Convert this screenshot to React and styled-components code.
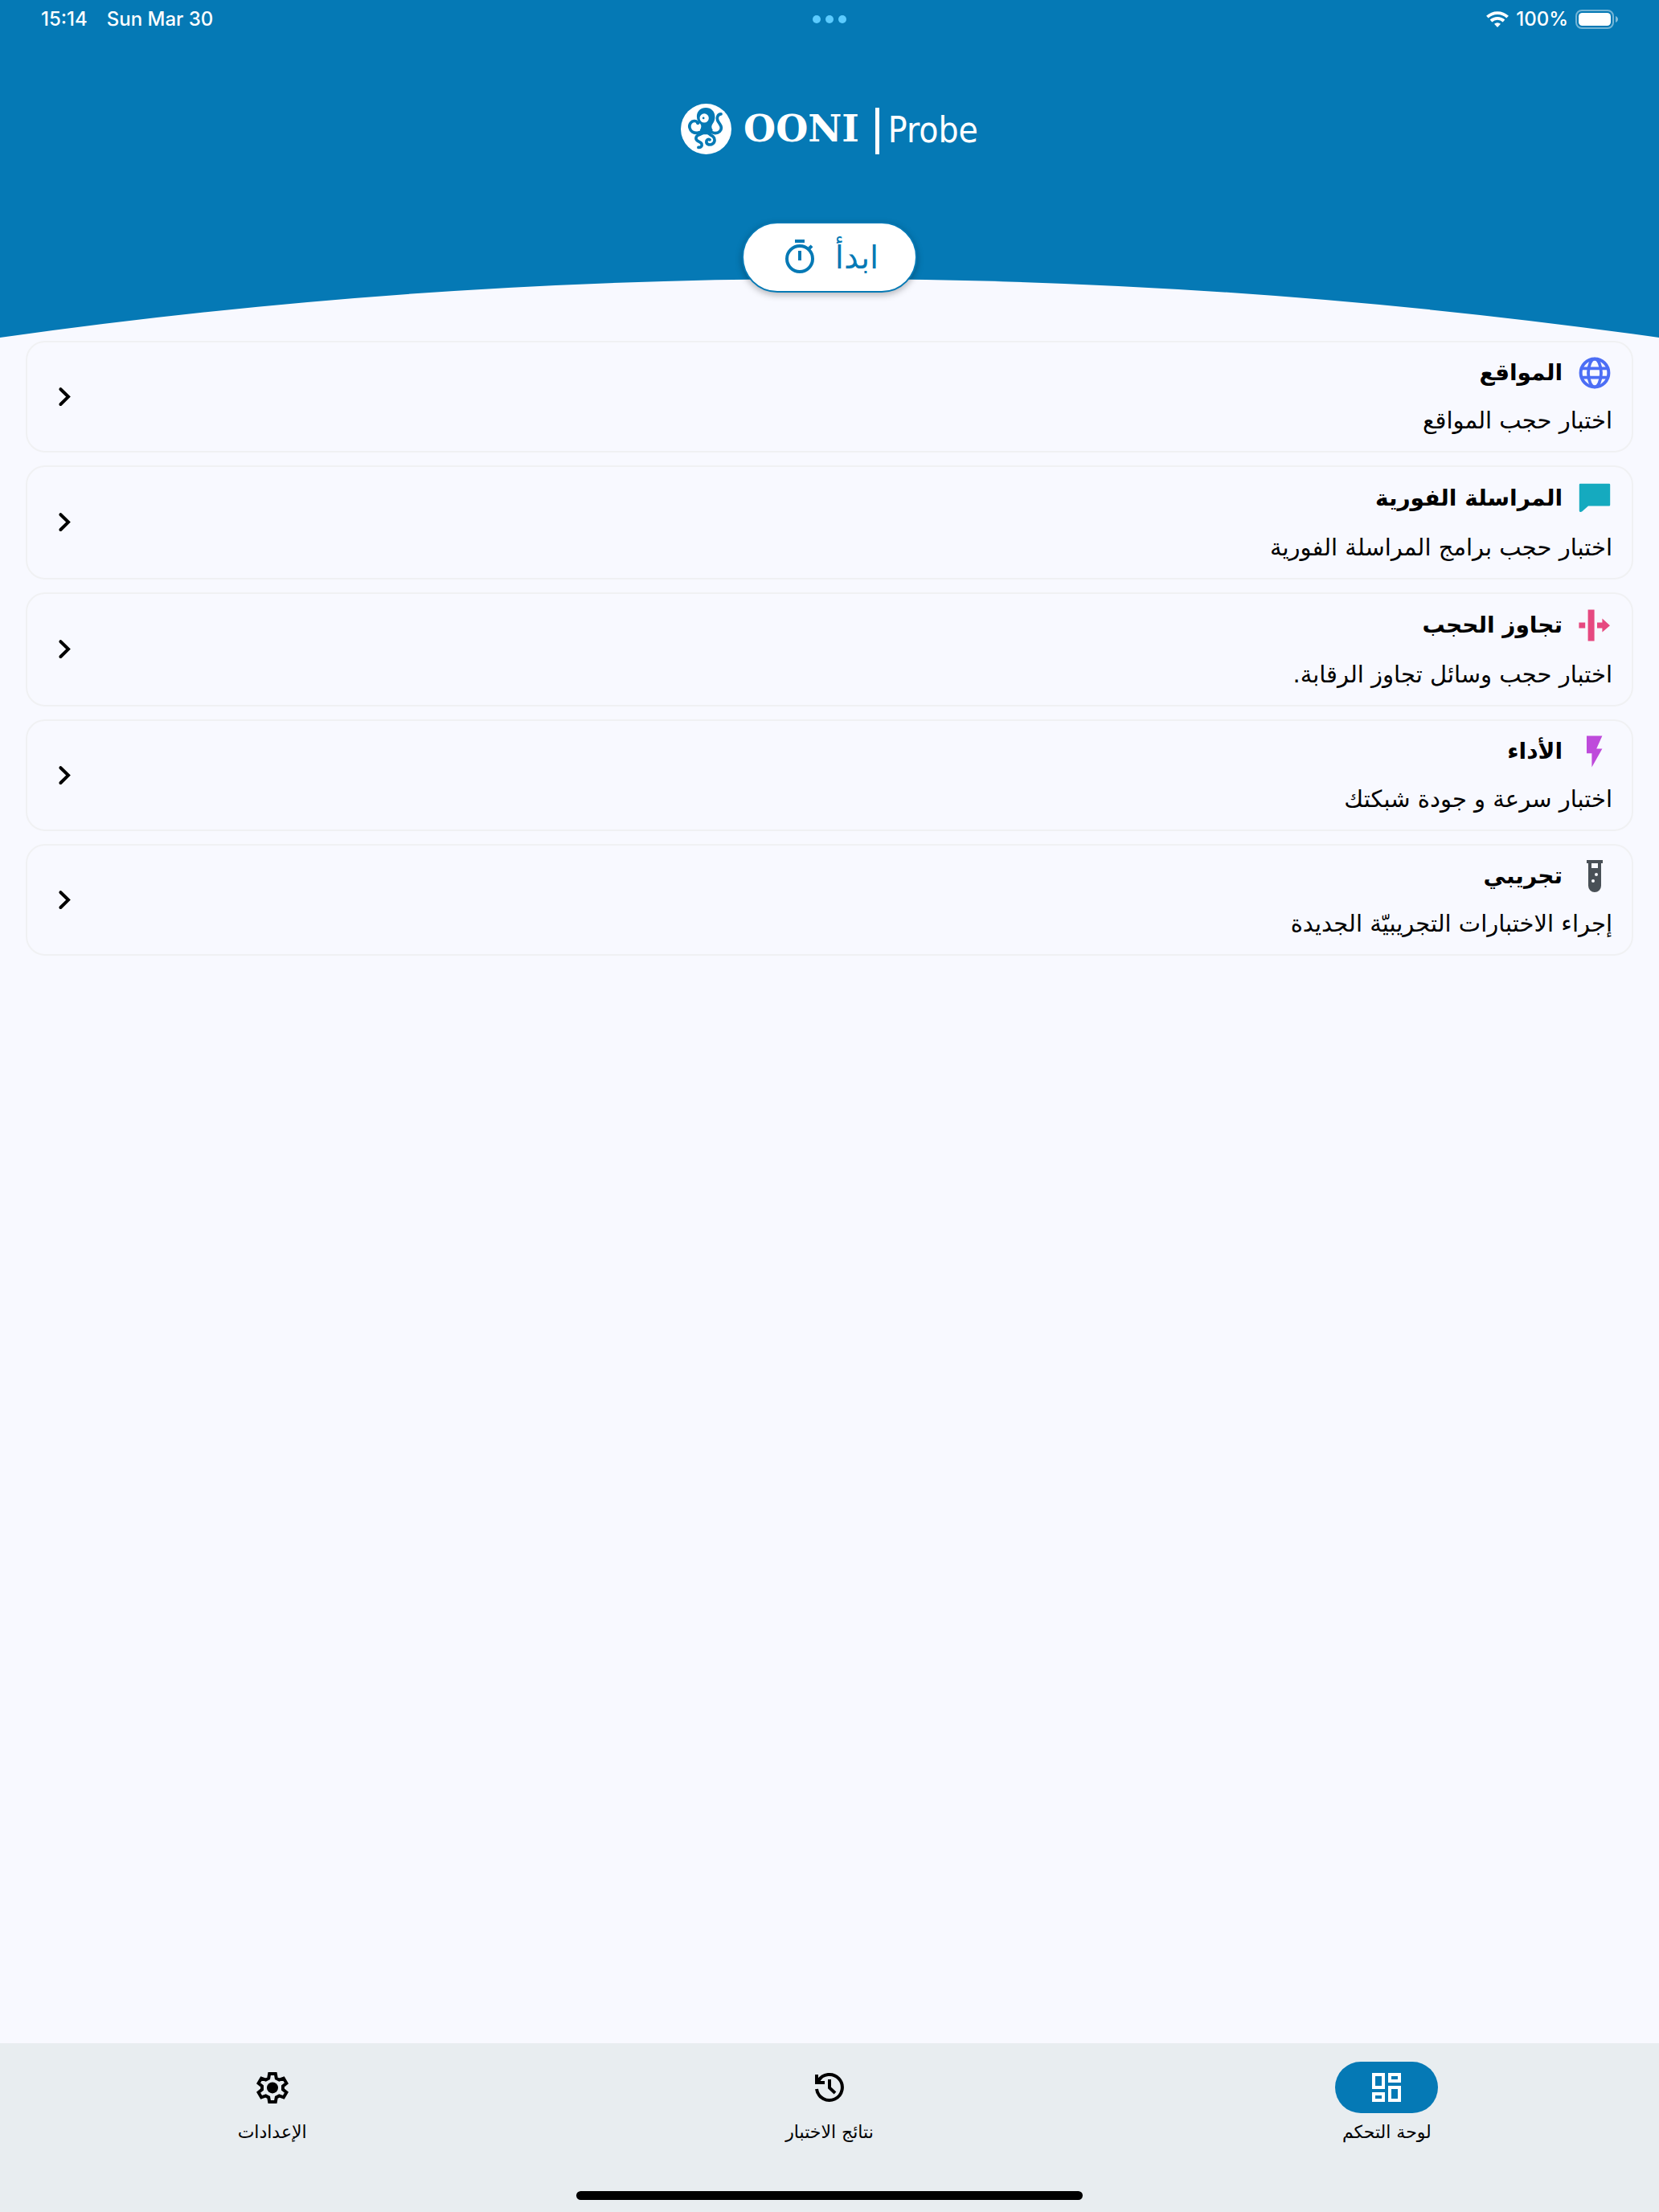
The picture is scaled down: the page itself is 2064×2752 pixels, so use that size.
import React from "react";
import styled, { createGlobalStyle } from "styled-components";

const blue = "#0579b5";
const surface = "#f8f9ff";
const arabic = `"DejaVu Sans", "Noto Sans", sans-serif`;

const GlobalStyle = createGlobalStyle`
  *, *::before, *::after { box-sizing: border-box; }
  html, body, #root { height: 100%; }
  body {
    margin: 0;
    background: ${surface};
    color: #000;
    font-family: ${arabic};
  }
  button { font: inherit; color: inherit; cursor: pointer; }
`;

const Screen = styled.div`
  display: flex;
  flex-direction: column;
  min-height: 100%;
`;

const Header = styled.header`
  display: grid;
  background: ${blue};
`;

const Curve = styled.svg`
  grid-area: 1 / 1;
  align-self: end;
  display: block;
  width: 100%;
  height: 74px;
`;

const HeaderContent = styled.div`
  grid-area: 1 / 1;
  display: flex;
  flex-direction: column;
  align-items: center;
  padding-bottom: 56px;
`;

const StatusBar = styled.div`
  display: grid;
  grid-template-columns: 1fr auto 1fr;
  align-items: center;
  align-self: stretch;
  height: 48px;
  padding: 0 51px;
  color: #fff;
  font-family: Inter, sans-serif;
  font-size: 24px;
  font-weight: 500;
  line-height: 32px;
`;

const StatusGroup = styled.div`
  display: flex;
  align-items: center;
  justify-content: ${(p) => (p.$end ? "flex-end" : "flex-start")};
  gap: ${(p) => (p.$end ? "9px" : "24px")};
`;

const Dots = styled.div`
  display: flex;
  gap: 6px;
`;

const Dot = styled.span`
  width: 10px;
  height: 10px;
  border-radius: 50%;
  background: #5ccbff;
`;

const Brand = styled.div`
  display: flex;
  align-items: center;
  height: 64px;
  margin-top: 80px;
  color: #fff;
`;

const BrandName = styled.span`
  margin-left: 15px;
  font: 700 46px/64px "DejaVu Serif", serif;
`;

const BrandDivider = styled.span`
  width: 5px;
  height: 58px;
  margin: 6px 11px 0 20px;
  background: #fff;
`;

const BrandProduct = styled.span`
  padding-top: 4px;
  font: 400 44px/64px "DejaVu Sans Condensed", "Noto Sans", sans-serif;
`;

const RunButton = styled.button`
  display: flex;
  align-items: center;
  gap: 20px;
  height: 88px;
  margin-top: 84px;
  padding: 0 46px;
  border: 2px solid ${blue};
  border-radius: 44px;
  background: #fff;
  color: ${blue};
  font-size: 40px;
  line-height: 48px;
  box-shadow: 0 3px 8px rgba(0, 0, 0, 0.28);
`;

const TestList = styled.main`
  display: flex;
  flex: 1;
  flex-direction: column;
  gap: 16px;
  padding: 4px 32px 32px;
`;

const Card = styled.button`
  display: flex;
  align-items: center;
  justify-content: space-between;
  width: 100%;
  padding: 12px 22px 16px;
  border: 2px solid #f0f1f3;
  border-radius: 24px;
  background: transparent;
  text-align: start;
`;

const CardText = styled.span`
  display: flex;
  flex-direction: column;
  gap: 12px;
`;

const CardTitle = styled.span`
  display: flex;
  align-items: center;
  gap: 16px;
  height: ${(p) => (p.$tall ? "54px" : "51px")};
  font-size: 28px;
  font-weight: 700;
  line-height: 48px;
`;

const CardDescription = styled.span`
  padding: 0 2px;
  font-size: 29px;
  line-height: 44px;
`;

const Icon = styled.svg`
  display: block;
  flex: none;
  width: 48px;
  height: 48px;
`;

const NavBar = styled.nav`
  display: flex;
  flex-direction: column;
  align-items: center;
  justify-content: space-between;
  height: 210px;
  padding: 23px 0 15px;
  background: #e8edf0;
`;

const NavItems = styled.div`
  display: grid;
  grid-template-columns: repeat(3, 1fr);
  gap: 16px;
  align-self: stretch;
`;

const NavItem = styled.button`
  display: flex;
  flex-direction: column;
  align-items: center;
  gap: 8px;
  padding: 0;
  border: 0;
  background: transparent;
  font-size: 22px;
  line-height: 32px;
`;

const NavPill = styled.span`
  display: grid;
  place-items: center;
  width: 128px;
  height: 64px;
  border-radius: 32px;
  background: ${(p) => (p.$active ? blue : "transparent")};
  color: ${(p) => (p.$active ? "#fff" : "#000")};
`;

const HomeIndicator = styled.span`
  width: 630px;
  max-width: 40%;
  height: 11px;
  border-radius: 6px;
  background: #000;
`;

const WifiIcon = () => (
  <svg width="28" height="20" viewBox="0 0 28 20" fill="none" stroke="#fff" strokeWidth="3.8">
    <path d="M1.4 7.2a18 18 0 0 1 25.2 0" />
    <path d="M6 12a11.6 11.6 0 0 1 16 0" />
    <path d="M14 20l-4-4.2a6 6 0 0 1 8 0z" fill="#fff" stroke="none" />
  </svg>
);

const BatteryIcon = () => (
  <svg width="53" height="24" viewBox="0 0 53 24">
    <rect x="1" y="1" width="46" height="22" rx="7" fill="none" stroke="#fff" strokeOpacity="0.45" strokeWidth="2" />
    <rect x="4" y="4" width="40" height="16" rx="4.5" fill="#fff" />
    <path d="M50 8c4 1.500 4 6.500 0 8z" fill="#fff" fillOpacity="0.5" />
  </svg>
);

const Octopus = () => (
  <svg width="63" height="63" viewBox="18 23 190 190">
    <circle cx="113" cy="118" r="95" fill="#fff" />
    <path
      d="M112 38c-20 0-34 14-34 33 0 13 6 22 14 29 4 6 3 13-2 22l8 16h32l8-16c-6-8-6-16 0-24 5-7 8-16 8-25 0-21-14-35-34-35z"
      fill={blue}
    />
    <g fill="none" stroke={blue} strokeWidth="11" strokeLinecap="round" strokeLinejoin="round">
      <path d="M100 125c-12 9-28 10-38 4-12-8-15-24-7-34 7-9 20-9 25-2" />
      <path d="M122 123c12 12 32 14 42 4 9-9 6-20 0-28-8-10-12-18-8-28 3-7 8-9 13-9" />
      <path d="M106 128c-6 9-14 10-22 13-10 4-12 15-4 21 7 5 16 5 17 14 1 7-5 12-13 11" />
      <path d="M118 130c5 9 14 10 21 16 8 7 8 21-1 27-9 7-23 4-24-6-1-8 7-12 13-9" />
    </g>
    <circle cx="82" cy="96" r="6" fill={blue} />
    <circle cx="106" cy="77" r="17" fill="#fff" />
    <circle cx="103" cy="77" r="4" fill={blue} />
  </svg>
);

const TimerIcon = () => (
  <Icon viewBox="0 0 24 24" fill="currentColor" aria-hidden="true">
    <path d="M9 1h6v2H9zM11 8h2v6h-2z" />
    <path d="m17.200 5.800 1.600-1.600 1.400 1.400-1.600 1.600z" />
    <circle cx="12" cy="13" r="8" fill="none" stroke="currentColor" strokeWidth="2" />
  </Icon>
);

const GlobeIcon = () => (
  <Icon viewBox="0 0 24 24" fill="none" stroke="#4c6ef5" strokeWidth="2" aria-hidden="true">
    <circle cx="12" cy="12" r="8.700" />
    <ellipse cx="12" cy="12" rx="4" ry="8.700" strokeWidth="1.900" />
    <path d="M3.500 9.200h17M3.500 14.800h17" strokeWidth="1.800" />
  </Icon>
);

const ChatIcon = () => (
  <Icon viewBox="0 0 24 24" fill="#15aabf" aria-hidden="true">
    <path d="M3 2.900h18a.6.6 0 0 1 .6.6v12.600a.6.6 0 0 1-.6.600H8L4.200 20.100c-.8.700-1.800.5-1.800-.5V3.500A.6.6 0 0 1 3 2.900z" />
  </Icon>
);

const CircumventionIcon = () => (
  <Icon viewBox="0 0 24 24" fill="#e64980" aria-hidden="true">
    <path d="M7.800 2.300h4v19.500h-4zM2.200 10.200h3.900v3.600H2.200zM13.500 10.200h3.200V7.800l4.800 4.300-4.800 4.200v-2.500h-3.200z" />
  </Icon>
);

const BoltIcon = () => (
  <Icon viewBox="0 0 24 24" fill="#be4bdb" aria-hidden="true">
    <path d="M7 2.300v10.800h3.200v8.600l6.500-11.500h-3.600l3.600-7.900z" />
  </Icon>
);

const TubeIcon = () => (
  <Icon viewBox="0 0 24 24" fill="#495057" aria-hidden="true">
    <path
      fillRule="evenodd"
      d="M7 2h10v2h-1v14a4 4 0 0 1-8 0V4H7zM10 4v3h4V4zM13 10a1 1 0 1 0 0 2 1 1 0 0 0 0-2zM11 14a1 1 0 1 0 0 2 1 1 0 0 0 0-2z"
    />
  </Icon>
);

const ChevronIcon = () => (
  <Icon viewBox="0 0 24 24" fill="none" stroke="#000" strokeWidth="2" strokeLinecap="round" aria-hidden="true">
    <path d="m9.700 8.100 4.800 4.700-4.800 4.700" />
  </Icon>
);

const DashboardIcon = () => (
  <Icon viewBox="0 0 24 24" fill="none" stroke="currentColor" strokeWidth="2" aria-hidden="true">
    <path d="M4 4h6v8H4zM14 4h6v4h-6zM4 16h6v4H4zM14 12h6v8h-6z" />
  </Icon>
);

const HistoryIcon = () => (
  <Icon viewBox="0 0 24 24" fill="none" stroke="currentColor" strokeWidth="2" aria-hidden="true">
    <path d="M4 13a8 8 0 1 0 1-5" />
    <path d="M4 4v5h5" />
    <path d="m4 9 2.500-3" />
    <path d="M12 7v5.200l3.500 3.300" />
  </Icon>
);

const SettingsIcon = () => (
  <Icon viewBox="0 0 24 24" fill="none" stroke="currentColor" strokeWidth="2" aria-hidden="true">
    <path d="M10.100 3.500h3.800l.5 2.800 1.800 1 2.700-1 1.800 3.100-2.200 1.800v2.100l2.200 1.800-1.800 3.100-2.700-1-1.800 1-.5 2.800h-3.800l-.5-2.800-1.800-1-2.700 1-1.800-3.100 2.200-1.800v-2.100L3.300 9.400l1.800-3.100 2.700 1 1.800-1z" />
    <circle cx="12" cy="12.200" r="3.500" fill="currentColor" stroke="none" />
  </Icon>
);

const tests = [
  { title: "المواقع", description: "اختبار حجب المواقع", TestIcon: GlobeIcon },
  { title: "المراسلة الفورية", description: "اختبار حجب برامج المراسلة الفورية", TestIcon: ChatIcon, tall: true },
  { title: "تجاوز الحجب", description: "اختبار حجب وسائل تجاوز الرقابة.", TestIcon: CircumventionIcon, tall: true },
  { title: "الأداء", description: "اختبار سرعة و جودة شبكتك", TestIcon: BoltIcon },
  { title: "تجريبي", description: "إجراء الاختبارات التجريبيّة الجديدة", TestIcon: TubeIcon },
];

const tabs = [
  { label: "لوحة التحكم", TabIcon: DashboardIcon, active: true },
  { label: "نتائج الاختبار", TabIcon: HistoryIcon },
  { label: "الإعدادات", TabIcon: SettingsIcon },
];

export default function App() {
  return (
    <>
      <GlobalStyle />
      <Screen dir="rtl" lang="ar">
        <Header>
          <Curve viewBox="0 0 100 74" preserveAspectRatio="none" aria-hidden="true">
            <path d="M0 74Q50-72 100 74z" fill={surface} />
          </Curve>
          <HeaderContent>
            <StatusBar dir="ltr">
              <StatusGroup>
                <span>15:14</span>
                <span>Sun Mar 30</span>
              </StatusGroup>
              <Dots>
                <Dot />
                <Dot />
                <Dot />
              </Dots>
              <StatusGroup $end>
                <WifiIcon />
                <span>100%</span>
                <BatteryIcon />
              </StatusGroup>
            </StatusBar>
            <Brand dir="ltr">
              <Octopus />
              <BrandName>OONI</BrandName>
              <BrandDivider />
              <BrandProduct>Probe</BrandProduct>
            </Brand>
            <RunButton type="button">
              <span>ابدأ</span>
              <TimerIcon />
            </RunButton>
          </HeaderContent>
        </Header>
        <TestList>
          {tests.map(({ title, description, TestIcon, tall }) => (
            <Card key={title} type="button">
              <CardText>
                <CardTitle $tall={tall}>
                  <TestIcon />
                  <span>{title}</span>
                </CardTitle>
                <CardDescription>{description}</CardDescription>
              </CardText>
              <ChevronIcon />
            </Card>
          ))}
        </TestList>
        <NavBar>
          <NavItems>
            {tabs.map(({ label, TabIcon, active }) => (
              <NavItem key={label} type="button" aria-current={active ? "page" : undefined}>
                <NavPill $active={active}>
                  <TabIcon />
                </NavPill>
                <span>{label}</span>
              </NavItem>
            ))}
          </NavItems>
          <HomeIndicator />
        </NavBar>
      </Screen>
    </>
  );
}
